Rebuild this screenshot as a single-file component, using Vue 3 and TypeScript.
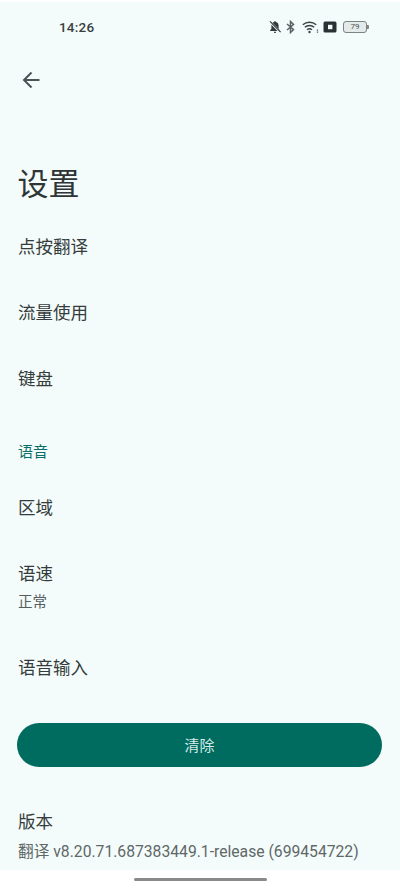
<script setup lang="ts">
interface Row { title: string; sub?: string }
const topRows: Row[] = [{ title: '点按翻译' }, { title: '流量使用' }, { title: '键盘' }]
const voiceRows: Row[] = [{ title: '区域' }, { title: '语速', sub: '正常' }, { title: '语音输入' }]
</script>

<template>
  <div class="page">
    <div class="screen">
      <div class="status">
        <span class="time">14:26</span>
        <div class="status-icons">
          <svg class="ic" width="14" height="14" viewBox="0 0 14 14">
            <path d="M7 1.2c-.6 0-1 .4-1 .9C4.300 2.600 3.400 4 3.400 5.800v3L2.200 10.300v.7h9.600v-.7L10.600 8.800v-3C10.600 4 9.700 2.600 8 2.100c0-.5-.4-.9-1-.9zM5.800 11.700a1.200 1.200 0 0 0 2.400 0z" fill="#33393a" />
            <path d="M1.800 1.600l10.600 10.800" stroke="#f3fcfa" stroke-width="2.200" />
            <path d="M2 1.400l10.600 10.800" stroke="#33393a" stroke-width="1.200" />
          </svg>
          <svg class="ic bt" width="9" height="14" viewBox="0 0 9 14">
            <path d="M1 4l6.500 5.500L4.500 12.500V1.500L7.500 4.500 1 10" fill="none" stroke="#5a6162" stroke-width="1.500" />
          </svg>
          <svg class="ic wifi" width="17" height="14" viewBox="0 0 17 14">
            <path d="M0.800 4.800a10 10 0 0 1 13.400 0M2.800 7.300a7 7 0 0 1 9.400 0M5 9.800a4 4 0 0 1 5 0" fill="none" stroke="#3b4243" stroke-width="1.400" />
            <circle cx="7.500" cy="12" r="1.200" fill="#3b4243" />
            <path d="M15.500 9.500v4" stroke="#5a6162" stroke-width="1.400" stroke-dasharray="1.200 .8" />
          </svg>
          <svg class="ic sq" width="14" height="12" viewBox="0 0 14 12">
            <rect x="0.500" y="0.500" width="13" height="11" rx="1.500" fill="#2b3132" />
            <rect x="5" y="3.800" width="4.400" height="4.400" fill="#f3fcfa" />
          </svg>
          <div class="battery"><span class="level">79</span><i class="nub"></i></div>
        </div>
      </div>

      <div class="toolbar">
        <svg width="24" height="24" viewBox="0 0 24 24">
          <path d="M20.500 12H5M12.500 4.500L5 12l7.500 7.500" fill="none" stroke="#4b5455" stroke-width="2" />
        </svg>
      </div>

      <h1 class="title">设置</h1>

      <div v-for="r in topRows" :key="r.title" class="row">
        <span class="row-title">{{ r.title }}</span>
      </div>

      <div class="section">语音</div>

      <div v-for="r in voiceRows" :key="r.title" class="row">
        <span class="row-title">{{ r.title }}</span>
        <span v-if="r.sub" class="row-sub">{{ r.sub }}</span>
      </div>

      <button class="clear" type="button">清除</button>

      <div class="version">
        <span class="row-title">版本</span>
        <span class="version-text">翻译 v8.20.71.687383449.1-release (699454722)</span>
      </div>
    </div>
    <div class="nav"><i class="handle"></i></div>
  </div>
</template>

<style>
html, body { margin: 0; background: #fff; }
</style>

<style scoped>
.page {
  width: 400px;
  height: 888px;
  display: flex;
  flex-direction: column;
  overflow: hidden;
  background: #fff;
  font-family: Roboto, "Noto Sans CJK SC", sans-serif;
}
.screen {
  height: 868px;
  margin-top: 2px;
  background: #f3fcfa;
  display: flex;
  flex-direction: column;
  padding: 0 18px;
  box-sizing: border-box;
  flex: none;
}
.status {
  height: 50px;
  margin: 0 -18px;
  padding: 0 30px 0 59px;
  display: flex;
  align-items: center;
  justify-content: space-between;
  flex: none;
}
.time { font-size: 13.500px; font-weight: 500; color: #3a4041; letter-spacing: 0.2px; }
.status-icons { display: flex; align-items: center; gap: 5px; }
.ic { display: block; flex: none; }
.ic.bt { margin: 0 2px 0 -1px; }
.ic.sq { margin-left: -1px; }
.battery {
  width: 22px;
  height: 10px;
  margin-left: 1px;
  margin-right: 3px;
  border: 1px solid #7b8384;
  border-radius: 3px;
  position: relative;
  display: flex;
  align-items: center;
  justify-content: center;
  background: #e4eaea;
}
.level { font-size: 8px; line-height: 1; color: #4c5354; }
.nub {
  position: absolute;
  right: -3px;
  top: 3px;
  width: 2px;
  height: 4px;
  background: #7b8384;
  border-radius: 0 1px 1px 0;
}
.toolbar { height: 56px; display: flex; align-items: center; flex: none; margin-left: 1px; }
.title {
  margin: 50px 0 2px -0.500px;
  height: 54px;
  line-height: 54px;
  font-size: 31px;
  font-weight: 400;
  color: #2f3536;
  flex: none;
}
.row {
  display: flex;
  flex-direction: column;
  padding: 20px 0;
  flex: none;
}
.row-title { font-size: 17.500px; line-height: 26px; color: #363c3d; }
.row-sub { font-size: 14.500px; line-height: 22px; color: #565e5f; margin-top: 5px; margin-bottom: 1px; }
.section {
  height: 20px;
  line-height: 20px;
  margin-top: 30px;
  margin-bottom: 13px;
  font-size: 15px;
  color: #0b6e68;
  flex: none;
}
.clear {
  display: block;
  width: 365px;
  height: 44px;
  margin: 22px 0 0 -1px;
  border: none;
  border-radius: 22px;
  background: #006b5f;
  color: #d5ebe6;
  font: inherit;
  font-size: 15px;
  padding: 0 0 2px;
  flex: none;
}
.version { display: flex; flex-direction: column; margin-top: 42px; flex: none; }
.version-text { font-size: 15.700px; line-height: 22px; color: #5f6768; margin-top: 6px; white-space: nowrap; }
.nav { flex: 1; display: flex; justify-content: center; align-items: center; }
.handle { display: block; width: 133px; height: 3px; background: #8a8a8a; border-radius: 2px; }
</style>
